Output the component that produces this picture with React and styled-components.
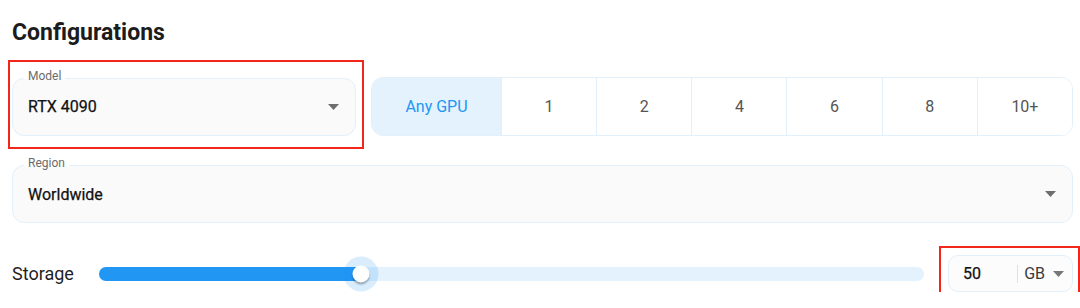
import React from 'react'
import styled, { createGlobalStyle } from 'styled-components'

const GlobalStyle = createGlobalStyle`
  html, body {
    margin: 0;
    padding: 0;
    background: #fff;
  }
  body {
    font-family: Roboto, "Noto Sans", "Liberation Sans", sans-serif;
    color: #1f1f1f;
  }
`

const Page = styled.div`
  width: 1061px;
  padding: 20px 0 0 12px;
`

const Title = styled.h2`
  margin: 0 0 31px;
  font-size: 23px;
  line-height: 26px;
  font-weight: 700;
  color: #1c1c1c;
`

const TopRow = styled.div`
  display: grid;
  grid-template-columns: 344px 1fr;
  gap: 15px;
  align-items: center;
`

const Anchor = styled.div`
  position: relative;
`

// red annotation frame drawn over a control
const Highlight = styled.div`
  position: absolute;
  top: ${p => p.$t}px;
  left: ${p => p.$l}px;
  right: ${p => p.$r}px;
  bottom: ${p => p.$b}px;
  border: 2px solid #f3261c;
  pointer-events: none;
`

const Field = styled.div`
  position: relative;
  box-sizing: border-box;
  height: 58px;
  display: flex;
  align-items: center;
  justify-content: space-between;
  padding: 0 16px 0 15px;
  background: #fafafa;
  border: 1px solid #e2f0fc;
  border-radius: 12px;
`

const FieldLabel = styled.span`
  position: absolute;
  top: -10px;
  left: 11px;
  padding: 0 4px;
  font-size: 12px;
  line-height: 14px;
  color: #6b6b6b;
  background: linear-gradient(#fff 0 10px, #fafafa 10px);
`

const FieldValue = styled.span`
  font-size: 16px;
  color: #111;
  -webkit-text-stroke: 0.25px #111;
`

const Caret = ({ color = '#6e6e6e' }) => (
  <svg width="11" height="6" viewBox="0 0 11 6">
    <path d="M0 0h11L5.5 6z" fill={color} />
  </svg>
)

const Toggle = styled.div`
  box-sizing: border-box;
  height: 59px;
  display: grid;
  grid-template-columns: 129px repeat(6, 1fr);
  border: 1px solid #e2f0fc;
  border-radius: 12px;
  overflow: hidden;
`

const ToggleCell = styled.button`
  all: unset;
  display: flex;
  align-items: center;
  justify-content: center;
  font-family: inherit;
  font-size: 16px;
  color: ${p => (p.$active ? '#2196f3' : '#555')};
  background: ${p => (p.$active ? '#e3f2fd' : '#fff')};
  & + & {
    border-left: 1px solid #e2f0fc;
  }
`

const RegionWrap = styled.div`
  margin-top: 29px;
`

const StorageRow = styled.div`
  margin-top: 32px;
  display: grid;
  grid-template-columns: 63px 1fr 125px;
  gap: 24px;
  align-items: center;
`

const StorageLabel = styled.span`
  font-size: 18px;
  color: #1f1f1f;
`

const Track = styled.div`
  position: relative;
  height: 14px;
  border-radius: 7px;
  background: #e3f2fd;
`

const Fill = styled.div`
  height: 100%;
  border-radius: 7px 0 0 7px;
  background: #2196f3;
`

const Thumb = styled.span`
  position: absolute;
  top: 50%;
  width: 17px;
  height: 17px;
  border-radius: 50%;
  background: #fff;
  transform: translate(-50%, -50%);
  box-shadow: 0 0 0 9px rgba(33, 150, 243, 0.17), 0 2px 2px rgba(0, 0, 0, 0.35);
`

const AmountBox = styled.div`
  box-sizing: border-box;
  height: 37px;
  display: flex;
  align-items: center;
  padding: 0 8px 0 14px;
  background: #fcfcfc;
  border: 1px solid #e2f0fc;
  border-radius: 10px;
`

const Amount = styled.span`
  flex: 1;
  font-size: 16px;
  color: #111;
  -webkit-text-stroke: 0.25px #111;
`

const Divider = styled.span`
  width: 1px;
  height: 18px;
  background: #cfe6fa;
  margin-right: 6px;
`

const Unit = styled.span`
  font-size: 16px;
  color: #3a3a3a;
  margin-right: 8px;
`

const gpuOptions = ['Any GPU', '1', '2', '4', '6', '8', '10+']

const storage = { value: 50, pct: 31.7 }

export default function App() {
  return (
    <>
      <GlobalStyle />
      <Page>
        <Title>Configurations</Title>
        <TopRow>
          <Anchor>
            <Field>
              <FieldLabel>Model</FieldLabel>
              <FieldValue>RTX 4090</FieldValue>
              <Caret />
            </Field>
            <Highlight $t={-18} $l={-4} $r={-8} $b={-13} />
          </Anchor>
          <Toggle>
            {gpuOptions.map((o, i) => (
              <ToggleCell key={o} $active={i === 0}>{o}</ToggleCell>
            ))}
          </Toggle>
        </TopRow>
        <RegionWrap>
          <Field>
            <FieldLabel>Region</FieldLabel>
            <FieldValue>Worldwide</FieldValue>
            <Caret />
          </Field>
        </RegionWrap>
        <StorageRow>
          <StorageLabel>Storage</StorageLabel>
          <Track>
            <Fill style={{ width: storage.pct + '%' }} />
            <Thumb style={{ left: storage.pct + '%' }} />
          </Track>
          <Anchor>
            <AmountBox>
              <Amount>{storage.value}</Amount>
              <Divider />
              <Unit>GB</Unit>
              <Caret color="#777" />
            </AmountBox>
            <Highlight $t={-9} $l={-9} $r={-7} $b={-11} />
          </Anchor>
        </StorageRow>
      </Page>
    </>
  )
}
